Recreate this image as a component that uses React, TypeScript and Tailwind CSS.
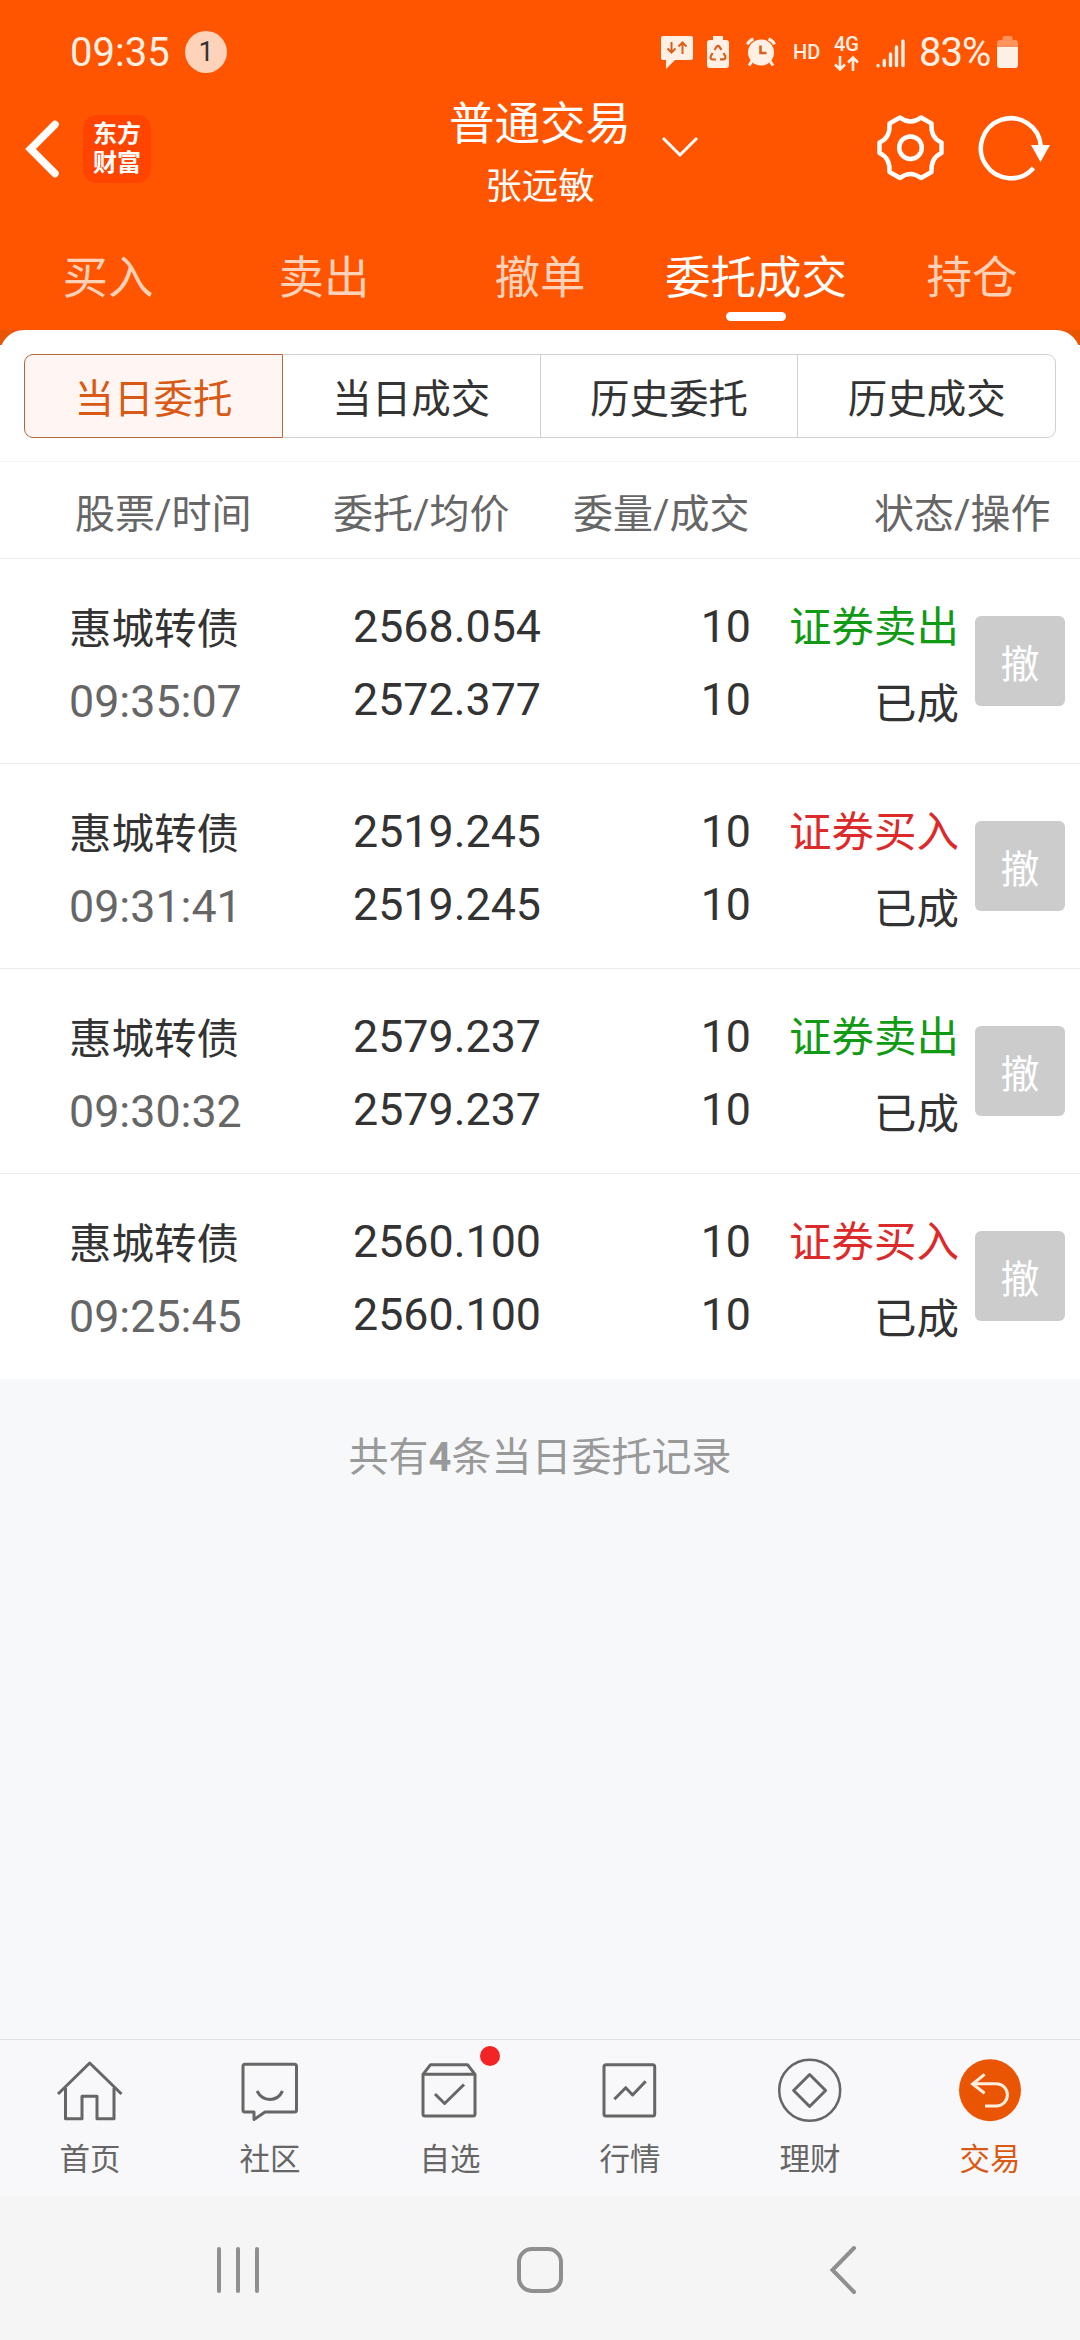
import type { ReactNode } from "react";
import clsx from "clsx";

const tabs = ["买入", "卖出", "撤单", "委托成交", "持仓"];
const segments = ["当日委托", "当日成交", "历史委托", "历史成交"];

const orders = [
  { name: "惠城转债", time: "09:35:07", price: "2568.054", avg: "2572.377", qty: 10, filled: 10, side: "sell" },
  { name: "惠城转债", time: "09:31:41", price: "2519.245", avg: "2519.245", qty: 10, filled: 10, side: "buy" },
  { name: "惠城转债", time: "09:30:32", price: "2579.237", avg: "2579.237", qty: 10, filled: 10, side: "sell" },
  { name: "惠城转债", time: "09:25:45", price: "2560.100", avg: "2560.100", qty: 10, filled: 10, side: "buy" },
];

function StatusBar() {
  return (
    <div className="flex h-[98px] items-start text-[#fff0e6]">
      <span className="ml-[70px] mt-[33px] w-[100px] text-[40px] leading-[40px]">09:35</span>
      <span className="ml-[15px] mt-[31px] flex size-[42px] items-center justify-center rounded-full bg-[#ffd2ba] text-[27px] leading-none text-[#333]">
        1
      </span>
      <svg className="ml-[434px] mt-[36px]" width="32" height="34" viewBox="0 0 32 34">
        <path d="M2 0h28a2 2 0 0 1 2 2v20a2 2 0 0 1-2 2H14L5 33V24H2a2 2 0 0 1-2-2V2a2 2 0 0 1 2-2z" fill="currentColor" />
        <path d="M10.500 6v10.500M6.500 12.500l4 4 4-4M21.500 18V7M17.500 10.500l4-4 4 4" fill="none" stroke="#d9601c" strokeWidth="2" />
      </svg>
      <svg className="ml-[14px] mt-[36px]" width="22" height="32" viewBox="0 0 22 32">
        <path d="M6 0h10v4h3a3 3 0 0 1 3 3v22a3 3 0 0 1-3 3H3a3 3 0 0 1-3-3V7a3 3 0 0 1 3-3h3z" fill="currentColor" />
        <path
          d="M7.500 14l2-3.200q1.500-1.800 3 0l2 3.200M16.500 17l1.800 3.200q.8 2.800-2 3.200H13M9 23.500H5.500q-2.600-.6-1.800-3L5.600 17"
          fill="none"
          stroke="#d9601c"
          strokeWidth="2.200"
        />
      </svg>
      <svg className="ml-[17px] mt-[37px]" width="30" height="30" viewBox="0 0 30 30">
        <circle cx="15" cy="15.500" r="13" fill="currentColor" />
        <path d="M1.500 7.500Q3 3.500 7.500 2M28.500 7.500Q27 3.500 22.500 2M6 24l-3 4.500M24 24l3 4.500" fill="none" stroke="currentColor" strokeWidth="3" />
        <path d="M14.500 8.500v7.500h6" fill="none" stroke="#d9601c" strokeWidth="2.600" />
      </svg>
      <span className="ml-[17px] mt-[42px] w-[28px] text-[20px] font-medium leading-[20px]">HD</span>
      <div className="ml-[13px] mt-[34px] flex w-[27px] flex-col">
        <span className="text-[20px] font-medium leading-[20px]">4G</span>
        <svg className="mt-px" width="26" height="17" viewBox="0 0 26 17" fill="none" stroke="currentColor" strokeWidth="2.600">
          <path d="M6 1v13M1 9.500l5 5 5-5M19 16V3M14 7.500l5-5 5 5" />
        </svg>
      </div>
      <svg className="ml-[15px] mt-[38px]" width="29" height="30" viewBox="0 0 29 30" stroke="currentColor" strokeWidth="3.400" strokeLinecap="round">
        <path d="M2 27.500v.2M8.300 22.500v5M14.500 16v11.500M20.500 9v18.500M27 3v24.500" />
      </svg>
      <span className="ml-[14px] mt-[33px] w-[73px] text-[40px] leading-[40px] tracking-[-1px]">83%</span>
      <svg className="ml-[5px] mt-[36px]" width="21" height="32" viewBox="0 0 21 32" fill="currentColor">
        <path d="M5.500 2a2 2 0 0 1 2-2h6a2 2 0 0 1 2 2v2H18a3 3 0 0 1 3 3v4H0V7a3 3 0 0 1 3-3h2.500z" opacity=".4" />
        <path d="M0 11h21v18a3 3 0 0 1-3 3H3a3 3 0 0 1-3-3z" />
      </svg>
    </div>
  );
}

function TitleBar() {
  return (
    <div className="flex h-[112px] items-start text-white">
      <svg className="ml-[24px] mt-[20px]" width="38" height="62" viewBox="0 0 38 62" fill="none" stroke="currentColor" strokeWidth="7.500" strokeLinecap="round">
        <path d="M31 6.500L6.500 31 31 55.500" />
      </svg>
      <div className="ml-[21px] mt-[17px] flex size-[68px] flex-col items-center justify-center gap-[5px] rounded-[14px] bg-[#ff4400] pb-[2px] text-[24px] font-bold leading-[24px]">
        <span>东方</span>
        <span>财富</span>
      </div>
      <div className="ml-[299px] flex w-[180px] flex-col items-center gap-[13px] whitespace-nowrap">
        <h1 className="text-[45.500px] leading-[54px]">普通交易</h1>
        <p className="text-[36.500px] leading-[44px]">张远敏</p>
      </div>
      <svg className="ml-[31px] mt-[38px]" width="38" height="22" viewBox="0 0 38 22" fill="none" stroke="currentColor" strokeWidth="3">
        <path d="M2 2l17 17L36 2" />
      </svg>
      <svg className="ml-[176px] mt-[15px]" width="71" height="70" viewBox="0 0 71 70" fill="none" stroke="currentColor" strokeWidth="4.500" strokeLinejoin="round">
        <path d="M25 4.500Q35.500 12.500 46 4.500L56.500 10.500Q55.500 25 66.500 29.500V40Q55.500 45 56.500 59L46 65Q35.500 57 25 65L14.500 59Q15.500 45 4.500 40V29.500Q15.500 25 14.500 10.500z" />
        <circle cx="35.500" cy="34.700" r="11.300" />
      </svg>
      <svg className="ml-[31px] mt-[16px]" width="74" height="70" viewBox="0 0 74 70" fill="none">
        <path d="M56.500 54A30 30 0 1 1 63.800 32" stroke="currentColor" strokeWidth="4.500" />
        <path d="M54 31h19L63.500 48z" fill="currentColor" />
      </svg>
    </div>
  );
}

function TopTabs() {
  return (
    <nav className="grid h-[120px] grid-cols-5 pt-[39px]">
      {tabs.map((tab) => {
        const active = tab === "委托成交";
        return (
          <div key={tab} className="flex flex-col items-center">
            <span className={clsx("text-[45.500px] leading-[60px]", active ? "text-white" : "text-[#ffd1b8]")}>{tab}</span>
            {active && <span className="mt-[3px] h-[9px] w-[60px] rounded-full bg-white" />}
          </div>
        );
      })}
    </nav>
  );
}

function Segments() {
  return (
    <div className="flex px-6 pb-[23px] pt-[9px]">
      {segments.map((label, i) => (
        <div
          key={label}
          className={clsx(
            "flex h-[84px] flex-1 justify-center border pt-[15px] text-[39.500px] leading-[60px]",
            i === 0
              ? "rounded-l-[9px] border-[#b4673c] bg-[#fff6f3] text-[#d85a14]"
              : "border-l-0 border-[#d0d0d0] text-[#333]",
            i === segments.length - 1 && "rounded-r-[9px]"
          )}
        >
          {label}
        </div>
      ))}
    </div>
  );
}

function OrderRow({ order, last }: { order: (typeof orders)[number]; last: boolean }) {
  return (
    <div className={clsx("flex h-[205px] items-start text-[44.800px] leading-[60px] text-[#333]", !last && "border-b border-[#ebebeb]")}>
      <div className="ml-[69px] flex w-[284px] flex-col gap-[12px] pt-[41px]">
        <span className="text-[42.500px]">{order.name}</span>
        <span className="text-[#666]">{order.time}</span>
      </div>
      <div className="flex w-[190px] flex-col gap-[13px] pt-[38px]">
        <span>{order.price}</span>
        <span>{order.avg}</span>
      </div>
      <div className="flex w-[208px] flex-col gap-[13px] pt-[38px] text-right">
        <span>{order.qty}</span>
        <span>{order.filled}</span>
      </div>
      <div className="flex w-[208px] flex-col gap-[17px] pt-[39px] text-right text-[42.500px]">
        <span className={order.side === "sell" ? "text-[#119a14]" : "text-[#dc2a2a]"}>
          {order.side === "sell" ? "证券卖出" : "证券买入"}
        </span>
        <span>已成</span>
      </div>
      <button className="ml-[16px] mt-[57px] size-[90px] rounded-[6px] bg-[#ccc] pt-[8px] text-[39px] text-white">撤</button>
    </div>
  );
}

function NavItem({ label, active, dot, children }: { label: string; active?: boolean; dot?: boolean; children: ReactNode }) {
  return (
    <div className={clsx("flex flex-col items-center pt-[14px]", active ? "text-[#d85a14]" : "text-[#666]")}>
      <div className="relative">
        <svg width="72" height="72" viewBox="0 0 72 72" fill="none" stroke="currentColor" strokeWidth="3" strokeLinejoin="round">
          {children}
        </svg>
        {dot && <span className="absolute -top-2 left-[66px] size-5 rounded-full bg-[#f22424]" />}
      </div>
      <span className="mt-[14px] text-[30.500px] leading-[40px]">{label}</span>
    </div>
  );
}

function BottomNav() {
  return (
    <nav className="grid h-[157px] grid-cols-6 border-t border-[#dfe1e4] bg-[#f8f8fb]">
      <NavItem label="首页">
        <path d="M4 40L35.700 9 67.500 40" />
        <path d="M11.500 34v30.700H28V42.300h15v22.400h17V34" />
      </NavItem>
      <NavItem label="社区">
        <path d="M11 10.300h49.500a2 2 0 0 1 2 2V56a2 2 0 0 1-2 2H31l-11 7.500V58h-9a2 2 0 0 1-2-2V12.300a2 2 0 0 1 2-2z" />
        <path d="M23 37q4.500 8.400 13 8.400T48.500 37" />
      </NavItem>
      <NavItem label="自选" dot>
        <path d="M9 20.300h52V60a2 2 0 0 1-2 2H11a2 2 0 0 1-2-2zl7.500-9.600h37l7.500 9.600" />
        <path d="M21 40l9.600 9.500L50 30.500" />
      </NavItem>
      <NavItem label="行情">
        <rect x="10" y="10.700" width="50.700" height="51.300" rx="2" />
        <path d="M20.400 45.300l11.300-11.600 6.900 7.300 13.100-13.700" />
      </NavItem>
      <NavItem label="理财">
        <circle cx="35.700" cy="36.300" r="30.500" strokeWidth="2.500" />
        <path d="M35.600 20.500l16 16-16 16-16-16z" />
      </NavItem>
      <NavItem label="交易" active>
        <circle cx="36" cy="36.200" r="31" fill="#ea5504" stroke="none" />
        <path d="M30.600 20.300l-12 9.700 12 9.300M18.500 29.700h23.800a11 11 0 0 1 0 22.300H31" stroke="#ffeedd" strokeLinejoin="miter" />
      </NavItem>
    </nav>
  );
}

function SystemNav() {
  return (
    <div className="flex h-[144px] items-center bg-[#f5f5f5] pt-[3px] text-[#8f8f8f]">
      <div className="ml-[217px] flex h-[46px] w-[42px] justify-between">
        <span className="w-[4px] rounded-full bg-current" />
        <span className="w-[4px] rounded-full bg-current" />
        <span className="w-[4px] rounded-full bg-current" />
      </div>
      <div className="ml-[258px] size-[46px] rounded-[15px] border-4 border-current" />
      <svg className="ml-[265px]" width="32" height="50" viewBox="0 0 32 50" fill="none" stroke="currentColor" strokeWidth="4" strokeLinecap="round">
        <path d="M26 3L4.500 25 26 47" />
      </svg>
    </div>
  );
}

export default function App() {
  return (
    <div className="flex h-[2340px] w-[1080px] flex-col overflow-hidden bg-[#f7f8fa] font-[Roboto,'Noto_Sans_CJK_SC',sans-serif]">
      <header className="bg-[#ff5500]">
        <StatusBar />
        <TitleBar />
        <TopTabs />
      </header>

      {/* rounded top edge of the sheet */}
      <div className="h-[15px] overflow-hidden bg-[#ea5504]">
        <div className="h-[30px] rounded-t-[24px] bg-white" />
      </div>

      <main className="bg-white">
        <Segments />
        <div className="flex h-[98px] items-start border-y border-t-[#f4f4f4] border-b-[#ebebeb] pl-[75px] pt-[23px] text-[40px] leading-[60px] text-[#666]">
          <span className="w-[258px]">股票/时间</span>
          <span className="w-[240px]">委托/均价</span>
          <span className="w-[301px]">委量/成交</span>
          <span>状态/操作</span>
        </div>
        {orders.map((order, i) => (
          <OrderRow key={order.time} order={order} last={i === orders.length - 1} />
        ))}
      </main>

      <p className="mt-[49px] text-center text-[40px] leading-[60px] text-[#999]">
        共有<b>4</b>条当日委托记录
      </p>

      <div className="mt-auto">
        <BottomNav />
        <SystemNav />
      </div>
    </div>
  );
}
